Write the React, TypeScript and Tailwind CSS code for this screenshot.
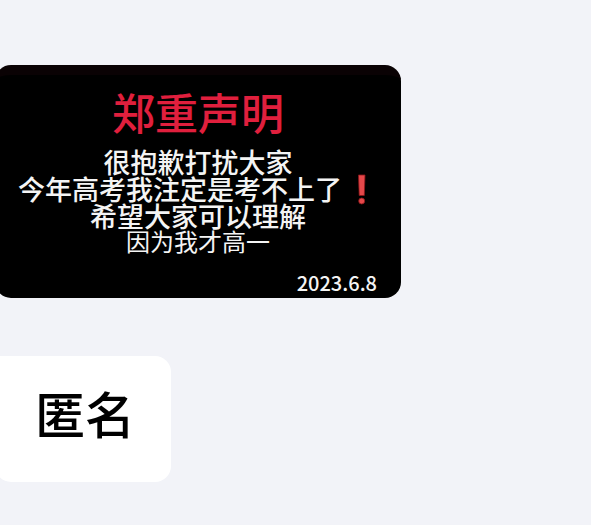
function ExclamationMark() {
  return (
    <svg
      className="h-[32px] w-[36px] shrink-0"
      viewBox="0 0 36 32"
      role="img"
      aria-label="!"
    >
      <path d="M16.5 2h6.5l-.7 20.5h-5.1z" fill="#e5484a" stroke="#8e1519" strokeWidth="0.8" />
      <circle cx="19.7" cy="28" r="3" fill="#e5484a" stroke="#8e1519" strokeWidth="0.8" />
    </svg>
  );
}

function StatementCard() {
  return (
    <article className="-ml-[5px] flex w-full max-w-[406px] flex-col rounded-[16px] border-t-[10px] border-[#0a0204] bg-black pt-2.5 text-center text-[27px] leading-[27px] font-medium whitespace-nowrap text-[#f4f4f4]">
      <h1 className="text-[43px] leading-[52px] text-[#e01f3d]">郑重声明</h1>
      <p className="mt-[11px]">很抱歉打扰大家</p>
      <p className="flex h-[27px] items-center justify-center">
        今年高考我注定是考不上了
        <ExclamationMark />
      </p>
      <p>希望大家可以理解</p>
      <p className="text-[24px] leading-[24px] font-normal">因为我才高一</p>
      <time
        dateTime="2023-06-08"
        className="mt-[18px] mb-[3px] pr-6 text-right text-[20px] leading-[24px]"
      >
        2023.6.8
      </time>
    </article>
  );
}

function NameBubble() {
  return (
    <div className="-ml-[5px] w-fit rounded-[16px] rounded-tl-none bg-white pt-5 pr-9 pb-[34px] pl-10 text-[50px] leading-[72px] font-medium text-black">
      匿名
    </div>
  );
}

export default function App() {
  return (
    <main
      lang="zh-CN"
      className="flex min-h-screen flex-col gap-[58px] overflow-hidden bg-[#f2f3f8] pt-[65px] pb-[43px] font-['Noto_Sans_CJK_SC',sans-serif]"
    >
      <StatementCard />
      <NameBubble />
    </main>
  );
}
